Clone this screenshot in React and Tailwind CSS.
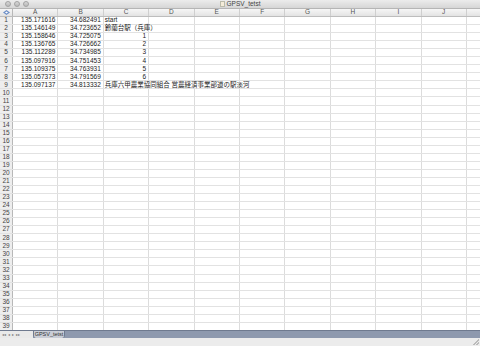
import React from 'react'

const cols = ['A', 'B', 'C', 'D', 'E', 'F', 'G', 'H', 'I', 'J', '']

const data = [
    ['135.171616', '34.682491', 'start'],
    ['135.146149', '34.723652', '鈴蘭台駅（兵庫）'],
    ['135.158646', '34.725075', '1'],
    ['135.136765', '34.726662', '2'],
    ['135.112289', '34.734985', '3'],
    ['135.097916', '34.751453', '4'],
    ['135.109375', '34.763931', '5'],
    ['135.057373', '34.791569', '6'],
    ['135.097137', '34.813332', '兵庫六甲農業協同組合 営農経済事業部道の駅淡河'],
]

const isNum = (v) => /^[0-9.]+$/.test(v)

const Cell = ({ value }) => {
    const num = value !== undefined && isNum(value)
    return (
        <div className={`w-[45.4px] shrink-0 h-full border-r border-[#dcdcdc] flex items-center ${num ? 'justify-end pr-[2px]' : 'justify-start pl-[1px]'}`}>
            {value !== undefined && <span className="whitespace-nowrap relative z-10">{value}</span>}
        </div>
    )
}

export default function App() {
    return (
        <div className="w-[480px] h-[346px] overflow-hidden bg-white flex flex-col text-[6.5px] leading-none text-[#222]" style={{ fontFamily: '"Liberation Sans", "Noto Sans CJK JP", sans-serif' }}>
            {/* title bar */}
            <div className="h-[9px] shrink-0 bg-gradient-to-b from-[#ececec] to-[#d6d6d6] border-b border-[#b5b5b5] flex items-center relative">
                <div className="flex gap-[3px] pl-[5px]">
                    {[0, 1, 2].map(i => (
                        <div key={i} className="w-[6px] h-[6px] rounded-full bg-gradient-to-b from-[#d8d8d8] to-[#b9b9b9] border border-[#a2a2a2]" />
                    ))}
                </div>
                <div className="absolute left-0 right-0 top-0 h-full flex items-center justify-center gap-[2px] text-[6.5px] text-[#444]">
                    <div className="w-[5px] h-[6px] bg-[#f4ecd9] border border-[#bba]" />
                    <span>GPSV_tetst</span>
                </div>
            </div>

            {/* column header */}
            <div className="h-[8px] shrink-0 flex bg-gradient-to-b from-[#f6f6f6] to-[#e3e3e3] border-b border-[#bdbdbd] text-[#555]">
                <div className="w-[13px] shrink-0 border-r border-[#b8b8b8] flex items-center justify-center">
                    <svg width="7" height="5" viewBox="0 0 7 5">
                        <path d="M3.5 0 L7 2.5 L3.5 5 L0 2.5 Z" fill="#6d8fc7" />
                        <path d="M3.5 1.5 L5 2.5 L3.5 3.5 L2 2.5 Z" fill="#fff" />
                    </svg>
                </div>
                {cols.map((c, i) => (
                    <div key={i} className="w-[45.4px] shrink-0 border-r border-[#cfcfcf] flex items-center justify-center">{c}</div>
                ))}
            </div>

            {/* rows */}
            <div className="flex-1 flex flex-col overflow-hidden">
                {Array.from({ length: 39 }).map((_, r) => (
                    <div key={r} className="h-[8.05px] shrink-0 flex border-b border-[#e2e2e2]">
                        <div className="w-[13px] shrink-0 bg-[#eeeeee] border-r border-[#b8b8b8] flex items-center justify-center text-[#444]">{r + 1}</div>
                        {cols.map((c, i) => (
                            <Cell key={i} value={data[r] ? data[r][i] : undefined} />
                        ))}
                    </div>
                ))}
            </div>

            {/* sheet tabs */}
            <div className="h-[8px] shrink-0 flex bg-[#8e99ae] border-t border-[#6f7a8f]">
                <div className="w-[33px] shrink-0 bg-[#e9e9e9] flex items-center gap-[2px] pl-[2px] text-[4px] text-[#777]">
                    <span>◂◂</span><span>◂</span><span>▸</span><span>▸▸</span>
                </div>
                <div className="w-[32px] shrink-0 bg-[#c9cdd6] border-x border-[#6f7a8f] rounded-b-[3px] flex items-center justify-center text-[5.5px] text-[#333]">GPSV_tetst</div>
            </div>
            <div className="h-[8px] shrink-0 bg-[#ececec] flex justify-end items-end">
                <div className="w-[6px] h-[6px] mr-[1px] mb-[1px] bg-[linear-gradient(135deg,transparent_50%,#bbb_50%,#bbb_60%,transparent_60%,transparent_75%,#bbb_75%,#bbb_85%,transparent_85%)]" />
            </div>
        </div>
    )
}
